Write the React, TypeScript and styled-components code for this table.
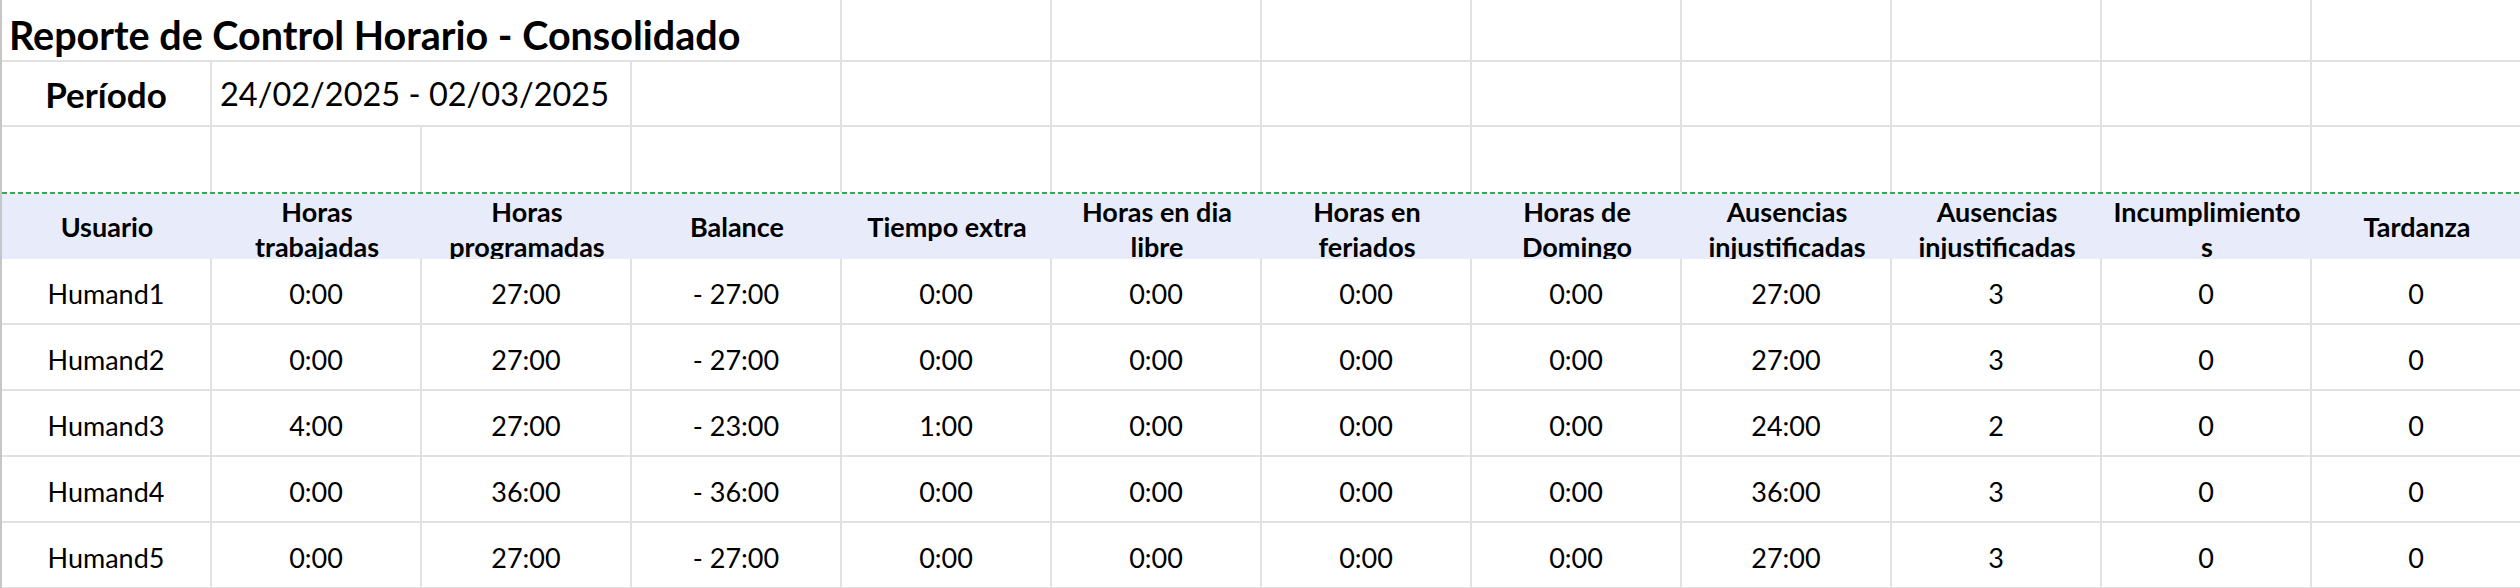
import styled, { createGlobalStyle } from "styled-components";

const GlobalStyle = createGlobalStyle`
  html, body {
    margin: 0;
    padding: 0;
    background: #fff;
    overflow: hidden;
  }
  body {
    font-family: Lato, "Open Sans", sans-serif;
    color: #000;
  }
`;

const GRID = "#e1e1e1";

const Sheet = styled.div`
  display: grid;
  grid-template-columns: repeat(12, 210px);
  grid-template-rows: 62px 65px 65px 2px 65px repeat(5, 66px);
  border-left: 2px solid #c6c6c6;
  width: max-content;
`;

const Cell = styled.div<{ $span?: number; $noBottom?: boolean }>`
  grid-column: span ${(p) => p.$span ?? 1};
  box-sizing: border-box;
  border-right: 2px solid ${GRID};
  border-bottom: ${(p) => (p.$noBottom ? "none" : `2px solid ${GRID}`)};
  display: flex;
  align-items: center;
  overflow: visible;
  white-space: nowrap;
`;

const TitleCell = styled(Cell)`
  font-size: 39.5px;
  font-weight: 700;
  padding: 8px 0 0 7px;
`;

const LabelCell = styled(Cell)`
  justify-content: center;
  font-size: 35px;
  font-weight: 700;
`;

const DateCell = styled(Cell)`
  font-size: 32.5px;
  padding: 0 0 0 8px;
`;

// copy-selection marquee under the blank row
const Marquee = styled.div`
  grid-column: 1 / -1;
  background: repeating-linear-gradient(
    90deg,
    #34a853 0 5px,
    transparent 5px 8px
  );
`;

const HeadCell = styled.div<{ $wrap: boolean }>`
  background: #e8ecfa;
  display: flex;
  align-items: ${(p) => (p.$wrap ? "flex-start" : "center")};
  justify-content: center;
  overflow: hidden;
  text-align: center;
  font-size: 27px;
  font-weight: 700;
  line-height: 35px;
  white-space: nowrap;
`;

const HeadText = styled.div`
  display: flex;
  flex-direction: column;
  align-items: center;
`;

const DataCell = styled(Cell)`
  justify-content: center;
  font-size: 27px;
  padding-top: 4px;
`;

const headers: string[][] = [
  ["Usuario"],
  ["Horas", "trabajadas"],
  ["Horas", "programadas"],
  ["Balance"],
  ["Tiempo extra"],
  ["Horas en dia", "libre"],
  ["Horas en", "feriados"],
  ["Horas de", "Domingo"],
  ["Ausencias", "injustificadas"],
  ["Ausencias", "injustificadas"],
  ["Incumplimiento", "s"],
  ["Tardanza"],
];

const rows: string[][] = [
  ["Humand1", "0:00", "27:00", "- 27:00", "0:00", "0:00", "0:00", "0:00", "27:00", "3", "0", "0"],
  ["Humand2", "0:00", "27:00", "- 27:00", "0:00", "0:00", "0:00", "0:00", "27:00", "3", "0", "0"],
  ["Humand3", "4:00", "27:00", "- 23:00", "1:00", "0:00", "0:00", "0:00", "24:00", "2", "0", "0"],
  ["Humand4", "0:00", "36:00", "- 36:00", "0:00", "0:00", "0:00", "0:00", "36:00", "3", "0", "0"],
  ["Humand5", "0:00", "27:00", "- 27:00", "0:00", "0:00", "0:00", "0:00", "27:00", "3", "0", "0"],
];

const empty = (n: number, key: string, noBottom?: boolean) =>
  Array.from({ length: n }, (_, i) => <Cell key={`${key}${i}`} $noBottom={noBottom} />);

export default function App() {
  return (
    <>
      <GlobalStyle />
      <Sheet>
        <TitleCell $span={4}>Reporte de Control Horario - Consolidado</TitleCell>
        {empty(8, "t")}

        <LabelCell>Período</LabelCell>
        <DateCell $span={2}>24/02/2025 - 02/03/2025</DateCell>
        {empty(9, "p")}

        {empty(12, "e", true)}

        <Marquee />

        {headers.map((lines, i) => (
          <HeadCell key={`h${i}`} $wrap={lines.length > 1}>
            <HeadText>
              {lines.map((l, j) => (
                <span key={j}>{l}</span>
              ))}
            </HeadText>
          </HeadCell>
        ))}

        {rows.map((r, ri) =>
          r.map((v, ci) => <DataCell key={`d${ri}-${ci}`}>{v}</DataCell>)
        )}
      </Sheet>
    </>
  );
}
